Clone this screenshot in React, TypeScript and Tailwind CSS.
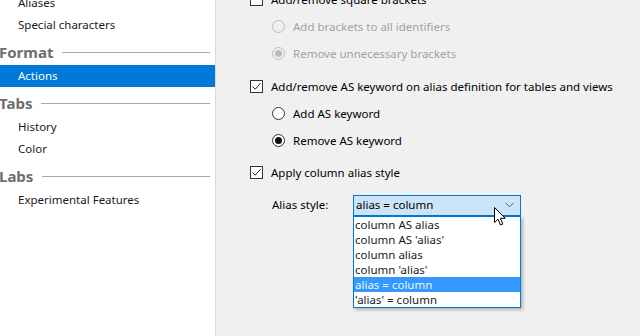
import React from "react";

const font = { fontFamily: '"Noto Sans", "Open Sans", sans-serif' };

const Check = ({ checked }: { checked?: boolean }) => (
  <span className="w-[13px] h-[13px] border border-[#333] bg-white flex items-center justify-center shrink-0">
    {checked && (
      <svg width="11" height="11" viewBox="0 0 11 11">
        <path d="M1.5 5.5 L4.2 8.2 L9.5 2.2" fill="none" stroke="#222" strokeWidth="1" />
      </svg>
    )}
  </span>
);

const Radio = ({ checked, disabled }: { checked?: boolean; disabled?: boolean }) => (
  <span
    className={
      "w-[13px] h-[13px] rounded-full border flex items-center justify-center shrink-0 " +
      (disabled ? "border-[#bcbcbc] bg-[#f0f0f0]" : "border-[#333] bg-white")
    }
  >
    {checked && (
      <span className={"w-[7px] h-[7px] rounded-full " + (disabled ? "bg-[#bcbcbc]" : "bg-[#111]")} />
    )}
  </span>
);

const Item = ({ label, active }: { label: string; active?: boolean }) => (
  <div
    className={
      "h-[22px] flex items-center pl-[18px] text-[11.5px] " +
      (active ? "bg-[#0078d7] text-white" : "text-[#1a1a1a]")
    }
  >
    {label}
  </div>
);

const Header = ({ label }: { label: string }) => (
  <div className="h-[29px] flex items-center gap-[9px] pt-[4px] pr-[5px] -ml-[1px]">
    <span className="text-[15px] font-bold text-[#6e6e6e] leading-none">{label}</span>
    <span className="flex-1 h-px bg-[#a9a9a9]" />
  </div>
);

const options = [
  "column AS alias",
  "column AS 'alias'",
  "column alias",
  "column 'alias'",
  "alias = column",
  "'alias' = column",
];

export default function App() {
  return (
    <div className="w-[640px] h-[336px] flex overflow-hidden" style={font}>
      <div className="w-[216px] h-full bg-white border-r border-[#dadada] shrink-0">
        <div className="-mt-[8px]">
          <Item label="Aliases" />
          <Item label="Special characters" />
          <Header label="Format" />
          <Item label="Actions" active />
          <Header label="Tabs" />
          <Item label="History" />
          <Item label="Color" />
          <Header label="Labs" />
          <Item label="Experimental Features" />
        </div>
      </div>

      <div className="flex-1 h-full bg-[#f0f0f0] pl-[34px] text-[11.5px] text-black">
        <div className="-mt-[14px] flex flex-col">
          <div className="h-[27px] flex items-center gap-[8px]">
            <Check />
            <span>Add/remove square brackets</span>
          </div>
          <div className="h-[27px] flex items-center gap-[8px] pl-[22px] text-[#a2a2a2]">
            <Radio disabled />
            <span>Add brackets to all identifiers</span>
          </div>
          <div className="h-[27px] flex items-center gap-[8px] pl-[22px] text-[#a2a2a2]">
            <Radio disabled checked />
            <span>Remove unnecessary brackets</span>
          </div>

          <div className="h-[27px] mt-[6px] flex items-center gap-[8px]">
            <Check checked />
            <span>Add/remove AS keyword on alias definition for tables and views</span>
          </div>
          <div className="h-[27px] flex items-center gap-[8px] pl-[22px]">
            <Radio />
            <span>Add AS keyword</span>
          </div>
          <div className="h-[27px] flex items-center gap-[8px] pl-[22px]">
            <Radio checked />
            <span>Remove AS keyword</span>
          </div>

          <div className="h-[27px] mt-[5px] flex items-center gap-[8px]">
            <Check checked />
            <span>Apply column alias style</span>
          </div>

          <div className="h-[22px] mt-[8px] flex items-center pl-[22px]">
            <span className="w-[81px]">Alias style:</span>
            <div className="relative">
              <div className="w-[168px] h-[21px] border border-[#0078d7] bg-[#cce4f7] flex items-center pl-[2px] pr-[6px]">
                <span className="flex-1">alias = column</span>
                <svg width="9" height="6" viewBox="0 0 9 6">
                  <path d="M0.5 0.8 L4.5 4.8 L8.5 0.8" fill="none" stroke="#606060" strokeWidth="1" />
                </svg>
              </div>
              <div className="absolute left-0 top-[21px] w-[168px] bg-white border border-[#0078d7] shadow-[2px_2px_3px_rgba(0,0,0,0.25)] z-10 flex flex-col">
                {options.map((o) => (
                  <div
                    key={o}
                    className={
                      "h-[15px] flex items-center pl-[1px] leading-[15px] " +
                      (o === "alias = column" ? "bg-[#3399ff] text-[#eef5ff]" : "text-[#1a1a1a]")
                    }
                  >
                    {o}
                  </div>
                ))}
              </div>
              <svg
                className="absolute left-[141px] top-[12px] z-20"
                width="13"
                height="20"
                viewBox="0 0 13 20"
              >
                <path
                  d="M0.5 0.5 L0.5 15.5 L4 12.2 L6.5 18 L8.8 17 L6.4 11.3 L11.2 11.3 Z"
                  fill="#fff"
                  stroke="#000"
                  strokeWidth="1"
                  strokeLinejoin="round"
                />
              </svg>
            </div>
          </div>
        </div>
      </div>
    </div>
  );
}
